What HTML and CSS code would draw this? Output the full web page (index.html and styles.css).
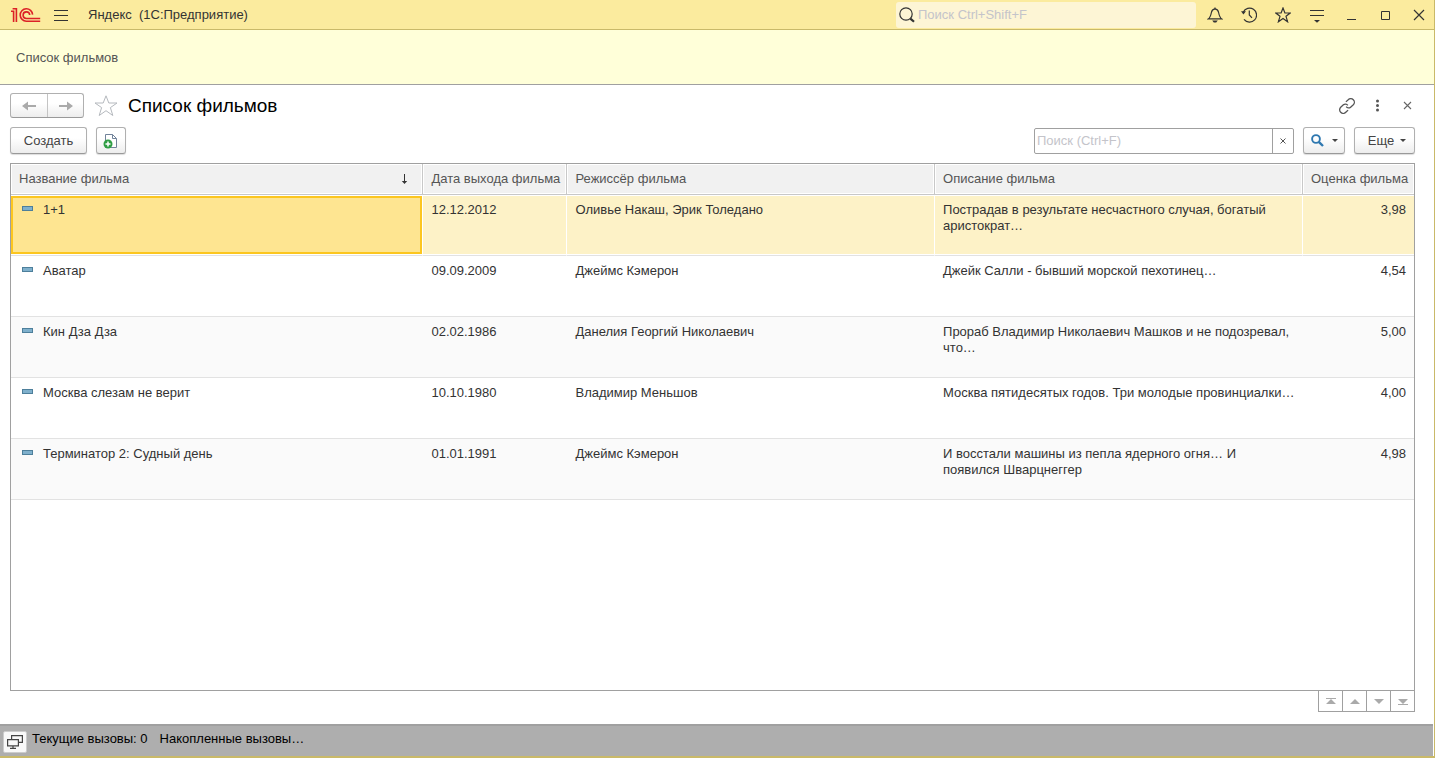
FILE: index.html
```html
<!DOCTYPE html>
<html lang="ru">
<head>
<meta charset="utf-8">
<title>Яндекс (1С:Предприятие)</title>
<link rel="stylesheet" href="styles.css">
</head>
<body>
<div class="window">
  <header class="titlebar">
    <svg class="logo" width="30" height="16" viewBox="0 0 30 16" fill="none" stroke="#dc2127" stroke-width="1.6" aria-label="1С">
      <path d="M0 4.3H2.6V15M1.6 1.8H5.4V15"/>
      <path d="M21.600 7.600A6.200 6.200 0 1 0 15.400 14.200H29.200"/>
      <path d="M18.700 8A3.300 3.300 0 1 0 15.400 11.500H29.200"/>
    </svg>
    <button class="tool menu" aria-label="Главное меню">
      <svg width="14" height="12" viewBox="0 0 14 12" stroke="#333" fill="none"><path d="M0 1.5H14M0 6.5H14M0 11.5H14"/></svg>
    </button>
    <h1 class="app-title">Яндекс&nbsp; (1С:Предприятие)</h1>
    <label class="global-search">
      <svg width="16" height="16" viewBox="0 0 16 16" fill="none" stroke="#333"><circle cx="7" cy="7" r="6.2" stroke-width="1.2"/><path d="M11.4 11.6L15 14.8" stroke-width="2.2"/></svg>
      <input type="text" placeholder="Поиск Ctrl+Shift+F" aria-label="Поиск">
    </label>
    <div class="window-tools">
      <button class="tool" aria-label="Уведомления"><svg width="16" height="16" viewBox="0 0 16 16" fill="none" stroke="#333" stroke-width="1.2"><path d="M1.300 11.900H14.700C12.600 10.400 12.200 8.500 11.600 5.500C11.200 3.200 10 2.200 8 1.900C6 2.200 4.800 3.200 4.400 5.500C3.800 8.500 3.400 10.400 1.300 11.900Z"/><path d="M8 0.400V2"/><path d="M5.200 13.600H10.800L9.200 15.400H6.800Z" fill="#333" stroke="none"/></svg></button>
      <button class="tool" aria-label="История"><svg width="16" height="16" viewBox="0 0 16 16" fill="none" stroke="#333" stroke-width="1.2"><path d="M2.200 5.200A7 7 0 1 1 3 12.400"/><path d="M8.300 3.500V8L11 10.800"/><path d="M0 4.300H5L2.400 7.500Z" fill="#333" stroke="none"/></svg></button>
      <button class="tool" aria-label="Избранное"><svg width="16" height="16" viewBox="0 0 16 16" fill="none" stroke="#333" stroke-width="1.200"><path d="M8 1L9.900 6H15.200L11 9.300L12.600 14.800L8 11.600L3.400 14.800L5 9.300L0.800 6H6.100Z"/></svg></button>
      <button class="tool" aria-label="Настройки"><svg width="16" height="16" viewBox="0 0 16 16" fill="none" stroke="#333"><path d="M1 3.500H15M1 8.500H15"/><path d="M5 13H11L8 15.800Z" fill="#333" stroke="none"/></svg></button>
      <button class="tool" aria-label="Свернуть"><svg width="16" height="16" viewBox="0 0 16 16" stroke="#333"><path d="M4 12.500H13"/></svg></button>
      <button class="tool" aria-label="Развернуть"><svg width="16" height="16" viewBox="0 0 16 16" fill="none" stroke="#333"><path d="M4.500 4.500H12.500V12.500H4.500Z"/></svg></button>
      <button class="tool" aria-label="Закрыть"><svg width="16" height="16" viewBox="0 0 16 16" stroke="#333" stroke-width="1.200"><path d="M3 3L13 13M13 3L3 13"/></svg></button>
    </div>
  </header>

  <nav class="sections"><a href="#list">Список фильмов</a></nav>

  <main class="page" id="list">
    <div class="page-head">
      <div class="history">
        <button aria-label="Назад"><svg width="14" height="10" viewBox="0 0 14 10"><path d="M14 4H6V0.500L0 5L6 9.500V6H14Z" fill="#aaa"/></svg></button>
        <button aria-label="Вперед"><svg width="14" height="10" viewBox="0 0 14 10"><path d="M0 4H8V0.500L14 5L8 9.500V6H0Z" fill="#aaa"/></svg></button>
      </div>
      <button class="tool star" aria-label="В избранное"><svg width="24" height="22" viewBox="0 0 24 22" fill="none" stroke="#b5b9be"><path d="M12 0.800L14.800 8H23L16.400 12.600L18.800 20.500L12 15.700L5.200 20.500L7.600 12.600L1 8H9.200Z"/></svg></button>
      <h2>Список фильмов</h2>
      <div class="page-tools">
        <button class="tool" aria-label="Ссылка"><svg width="16" height="16" viewBox="0 0 16 16" fill="none" stroke="#555" stroke-width="1.300"><path d="M6.900 3.900L9.200 1.700A3.100 3.100 0 0 1 14.300 6.800L11.600 9.200A3 3 0 0 1 7.200 8.700"/><path d="M9.100 12.100L6.800 14.300A3.100 3.100 0 0 1 1.700 9.200L4.400 6.800A3 3 0 0 1 8.800 7.300"/></svg></button>
        <button class="tool" aria-label="Еще"><svg width="16" height="16" viewBox="0 0 16 16" fill="#555"><circle cx="8.500" cy="3" r="1.500"/><circle cx="8.500" cy="7.500" r="1.500"/><circle cx="8.500" cy="12" r="1.500"/></svg></button>
        <button class="tool" aria-label="Закрыть форму"><svg width="16" height="16" viewBox="0 0 16 16" stroke="#666" stroke-width="1.100"><path d="M5 4L12 11M12 4L5 11"/></svg></button>
      </div>
    </div>

    <div class="commands">
      <button class="btn create">Создать</button>
      <button class="btn copy" aria-label="Создать копированием"><svg width="15" height="16" viewBox="0 0 15 16"><path d="M2.500 8V1.500H9.500L13.500 5.500V14.500H8" fill="#fff" stroke="#71839a"/><path d="M9.500 1.500V5.500H13.500" fill="none" stroke="#71839a"/><circle cx="5" cy="11" r="4.500" fill="#2f9e44"/><path d="M5 8.500V13.500M2.500 11H7.500" stroke="#fff" stroke-width="1.500"/></svg></button>
      <div class="find">
        <input type="text" placeholder="Поиск (Ctrl+F)" aria-label="Поиск по списку">
        <button aria-label="Очистить"><svg width="6" height="6" viewBox="0 0 6 6" stroke="#555"><path d="M0.500 0.500L5.500 5.500M5.500 0.500L0.500 5.500"/></svg></button>
      </div>
      <button class="btn lookup" aria-label="Найти"><svg width="13" height="13" viewBox="0 0 13 13" fill="none" stroke="#2f78b0"><circle cx="5" cy="5" r="3.900" stroke-width="1.900"/><path d="M7.800 7.800L12 12" stroke-width="2.400"/></svg><span class="caret"></span></button>
      <button class="btn more">Еще<span class="caret"></span></button>
    </div>

    <div class="list">
      <table>
        <colgroup><col class="c-name"><col class="c-date"><col class="c-dir"><col><col class="c-rate"></colgroup>
        <thead>
          <tr>
            <th><div class="sorted">Название фильма<svg width="7" height="11" viewBox="0 0 7 11" stroke="#333" fill="none"><path d="M3.500 0V9"/><path d="M0.800 7H6.200L3.500 10Z" fill="#333" stroke="none"/></svg></div></th>
            <th>Дата выхода фильма</th><th>Режиссёр фильма</th><th>Описание фильма</th><th>Оценка фильма</th>
          </tr>
        </thead>
        <tbody>
          <tr class="selected"><td><span class="mark"></span>1+1</td><td>12.12.2012</td><td>Оливье Накаш, Эрик Толедано</td><td>Пострадав в результате несчастного случая, богатый аристократ…</td><td>3,98</td></tr>
          <tr><td><span class="mark"></span>Аватар</td><td>09.09.2009</td><td>Джеймс Кэмерон</td><td>Джейк Салли - бывший морской пехотинец…</td><td>4,54</td></tr>
          <tr><td><span class="mark"></span>Кин Дза Дза</td><td>02.02.1986</td><td>Данелия Георгий Николаевич</td><td>Прораб Владимир Николаевич Машков и не подозревал, что…</td><td>5,00</td></tr>
          <tr><td><span class="mark"></span>Москва слезам не верит</td><td>10.10.1980</td><td>Владимир Меньшов</td><td>Москва пятидесятых годов. Три молодые провинциалки…</td><td>4,00</td></tr>
          <tr><td><span class="mark"></span>Терминатор 2: Судный день</td><td>01.01.1991</td><td>Джеймс Кэмерон</td><td>И восстали машины из пепла ядерного огня… И появился Шварцнеггер</td><td>4,98</td></tr>
        </tbody>
      </table>
    </div>
    <div class="pager">
      <button aria-label="В начало"><svg width="10" height="7" viewBox="0 0 10 7" fill="#aaa"><path d="M0 0H10V1H0ZM5 1L10 6H0Z"/></svg></button>
      <button aria-label="Вверх"><svg width="10" height="7" viewBox="0 0 10 7" fill="#aaa"><path d="M5 1L10 6H0Z"/></svg></button>
      <button aria-label="Вниз"><svg width="10" height="7" viewBox="0 0 10 7" fill="#aaa"><path d="M0 1H10L5 6Z"/></svg></button>
      <button aria-label="В конец"><svg width="10" height="7" viewBox="0 0 10 7" fill="#aaa"><path d="M0 1H10L5 6ZM0 6H10V7H0Z"/></svg></button>
    </div>
  </main>

  <footer class="status">
    <button aria-label="Показатели производительности"><svg width="16" height="14" viewBox="0 0 16 14" fill="none" stroke="#444" stroke-width="1.200"><path d="M4.600 4V0.600H15.400V7.400H12"/><path d="M0.600 4.600H11.400V10.800H0.600Z"/><path d="M6 11V13M3 13.400H9"/></svg></button>
    <span>Текущие вызовы: 0</span><span>Накопленные вызовы…</span>
  </footer>
</div>
</body>
</html>
```
FILE: styles.css
```css
* { box-sizing: border-box; }
body { margin: 0; background: #fff; color: #333; font: 13px/16px "Liberation Sans", Arial, sans-serif; }
button, input { font: inherit; color: inherit; margin: 0; }
button { display: inline-flex; align-items: center; justify-content: center; padding: 0; background: none; border: 0; }
svg { display: block; flex: none; }
h1, h2 { margin: 0; font-weight: normal; }
input { border: 0; outline: 0; padding: 0; background: none; min-width: 0; flex: 1; }
input::placeholder { color: #c4c4ca; opacity: 1; }

.window { display: flex; flex-direction: column; height: 100vh; border: solid #c9b969; border-width: 0 1px 2px 0; }

.titlebar { display: flex; align-items: center; height: 30px; padding: 0 7px 0 11px; background: #fbeb9e; border-bottom: 1px solid #c9b969; }
.menu { margin-left: 13px; }
.app-title { margin-left: 20px; font-size: 13px; line-height: 17px; }
.global-search { display: flex; align-items: center; gap: 3px; width: 300px; height: 26px; margin-left: auto; padding: 0 3px; border-radius: 3px; background: #fdf5d5; }
.window-tools { display: flex; gap: 18px; margin-left: 11px; }

.sections { height: 55px; padding: 20px 16px; background: #ffffd9; border-bottom: 1px solid #a0a0a0; }
.sections a { color: #555; text-decoration: none; }

.page { display: flex; flex-direction: column; flex: 1; min-height: 0; padding: 8px 19px 12px 10px; }
.page-head { display: flex; align-items: center; height: 25px; }
.history { display: flex; height: 25px; border: 1px solid #b0b0b0; border-bottom-color: #999; border-radius: 3px; background: linear-gradient(#fff 40%, #ededed); }
.history button { width: 36px; }
.history button + button { border-left: 1px solid #c4c4c4; }
.star { margin-left: 10px; }
h2 { margin-left: 10px; font-size: 19px; line-height: 24px; color: #000; }
.page-tools { display: flex; gap: 14px; margin-left: auto; }

.commands { display: flex; align-items: center; margin: 9px 0; }
.btn { height: 27px; border: 1px solid #b0b0b0; border-bottom-color: #999; border-radius: 3px; background: linear-gradient(#fff 40%, #ededed); box-shadow: 0 1px 1px #ddd; color: #444; }
.create { width: 77px; }
.copy { width: 30px; margin-left: 9px; padding-right: 2px; }
.find { display: flex; width: 260px; height: 26px; margin-left: auto; border: 1px solid #a0a0a0; border-radius: 2px; }
.find input { padding-left: 2px; }
.find button { width: 21px; border-left: 1px solid #a0a0a0; }
.lookup { width: 42px; margin-left: 9px; gap: 8px; }
.more { width: 61px; margin-left: 9px; padding-left: 5px; gap: 6px; }
.caret { border: 3px solid transparent; border-top-color: #444; border-bottom: 0; }

.list { flex: 1; min-height: 0; border: 1px solid #a0a0a0; overflow: hidden; }
table { width: 100%; table-layout: fixed; border-collapse: separate; border-spacing: 0; }
.c-name { width: 29.4%; }
.c-date { width: 144px; }
.c-dir { width: 26.2%; }
.c-rate { width: 111px; }
th { height: 31px; padding: 0 6px 0 8px; border: solid #c8c8c8; border-width: 0 1px 1px 0; box-shadow: inset 0 0 0 1px #fff; background: #f1f1f1; color: #555; font-weight: normal; text-align: left; white-space: nowrap; }
.sorted { display: flex; align-items: center; justify-content: space-between; padding-right: 8px; }
td { height: 61px; padding: 7px 8px 0; border: solid #e2e2e2; border-width: 0 0 1px; vertical-align: top; }
td:first-child { padding-left: 11px; }
td:last-child { text-align: right; }
tbody tr:nth-child(odd) { background: #fafafa; }
.mark { display: inline-block; width: 11px; height: 5px; margin-right: 10px; vertical-align: 3px; background: #7fb0cc; border: 1px solid #4d7f9b; }
tbody tr.selected { background: #fdf2c7; }
.selected td { border-right: 1px solid #fff; box-shadow: inset 0 1px #fff, inset 0 -1px #fff; }
.selected td:first-child { background: #fee591; box-shadow: inset 0 1px #fff, inset 0 -1px #fff, inset 0 3px #fcc61f, inset 0 -3px #fcc61f, inset 2px 0 #fcc61f, inset -2px 0 #fcc61f; }
th:last-child, .selected td:last-child { border-right: 0; }

.pager { display: flex; align-self: flex-end; border: 1px solid #a0a0a0; border-top: 0; }
.pager button { width: 24px; height: 20px; border-left: 1px solid #a0a0a0; }
.pager button:first-child { width: 23px; border-left: 0; }

.status { display: flex; align-items: flex-start; gap: 12px; height: 32px; margin-right: 1px; padding: 5px 3px; background: #aeaeae; border-top: 2px solid #a0a0a0; color: #000; }
.status button { width: 24px; height: 22px; margin-right: -7px; border-radius: 2px; background: #f8f8f8; border: 1px solid #ccc; }
```
